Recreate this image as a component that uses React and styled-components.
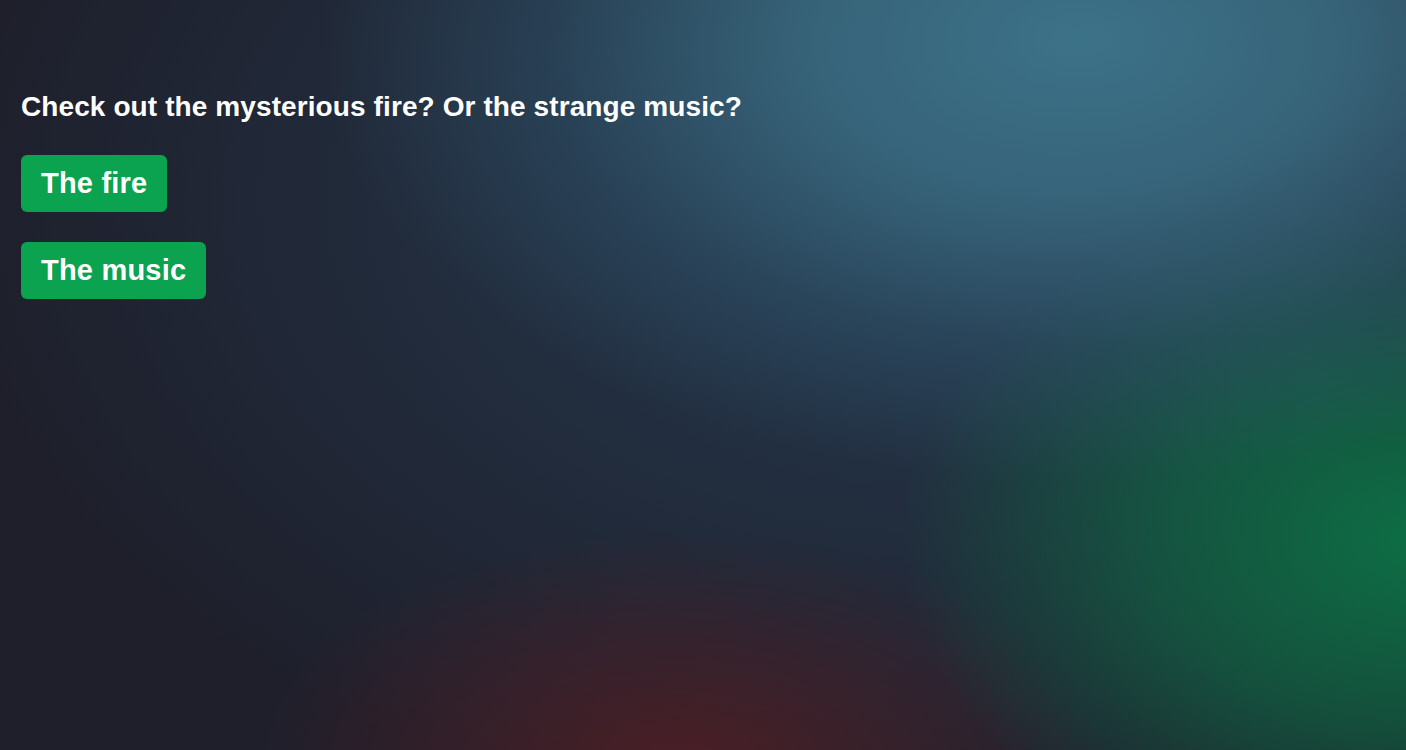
import React from "react";
import styled, { createGlobalStyle } from "styled-components";

const Global = createGlobalStyle`
  html, body { margin: 0; padding: 0; }
  body {
    min-height: 100vh;
    font-family: "Liberation Sans", Arial, sans-serif;
    background-color: #1e1f2b;
  }
`;

const Page = styled.div`
  min-height: 100vh;
  box-sizing: border-box;
  padding: 89px 21px 0;
  background:
    radial-gradient(ellipse 760px 440px at 1080px 40px, rgba(60,114,136,1) 0%, rgba(58,108,130,0.85) 35%, rgba(50,90,115,0.4) 70%, rgba(50,90,115,0) 100%),
    radial-gradient(ellipse 520px 360px at 1420px 540px, rgba(13,110,68,1) 0%, rgba(13,110,68,0.6) 50%, rgba(13,110,68,0) 100%),
    radial-gradient(ellipse 430px 240px at 680px 770px, rgba(78,30,36,0.95), rgba(78,30,36,0) 100%),
    radial-gradient(ellipse 1000px 650px at 950px 200px, rgba(40,68,92,0.75), rgba(40,68,92,0) 100%),
    #1e1f2b;
  display: flex;
  flex-direction: column;
  align-items: flex-start;
`;

const Prompt = styled.h2`
  margin: 0 0 30px;
  color: #ffffff;
  font-size: 28px;
  font-weight: 700;
  letter-spacing: 0.1px;
  line-height: 36px;
`;

const Choices = styled.div`
  display: flex;
  flex-direction: column;
  align-items: flex-start;
  gap: 30px;
`;

const Choice = styled.button`
  font-family: "Liberation Sans", Arial, sans-serif;
  font-size: 29px;
  font-weight: 700;
  letter-spacing: 0.2px;
  color: #ffffff;
  background: #0ba34f;
  border: none;
  border-radius: 6px;
  padding: 0 20px;
  height: 57px;
  cursor: pointer;
`;

export default function App() {
  return (
    <>
      <Global />
      <Page>
        <Prompt>Check out the mysterious fire? Or the strange music?</Prompt>
        <Choices>
          <Choice>The fire</Choice>
          <Choice>The music</Choice>
        </Choices>
      </Page>
    </>
  );
}
